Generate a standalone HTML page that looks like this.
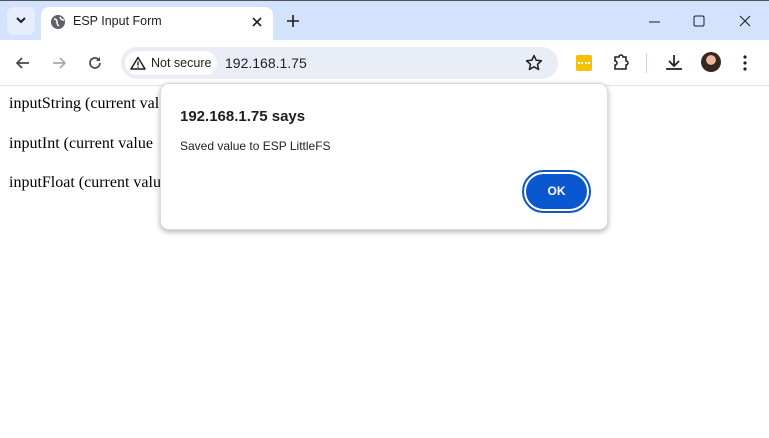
<!DOCTYPE html>
<html><head><meta charset="utf-8"><style>
*{margin:0;padding:0;box-sizing:border-box}
body{width:769px;height:438px;overflow:hidden;background:#fff;font-family:"Liberation Sans",sans-serif;position:relative}
.tabstrip{position:absolute;left:0;top:0;width:769px;height:40px;background:#d3e3fd;border-top:1px solid #555}
.tab{position:absolute;left:41px;top:6px;width:232px;height:34px;background:#fff;border-radius:8px 8px 0 0}
.toolbar{position:absolute;left:0;top:40px;width:769px;height:46px;background:#fff;border-bottom:1px solid #e3e3e3}
.omni{position:absolute;left:121px;top:7px;width:437px;height:32px;border-radius:16px;background:#e9eef6}
.chip{position:absolute;left:4px;top:4px;width:92px;height:24px;border-radius:12px;background:#fff;font-size:12.5px;color:#1f1f1f;line-height:24px;padding-left:26px}
.abs{position:absolute}
.content{position:absolute;left:9px;font-family:"Liberation Serif",serif;font-size:16px;color:#000}
.dlg{position:absolute;left:160px;top:83px;width:448px;height:147px;background:#fff;border-radius:9px;box-shadow:0 2px 6px rgba(0,0,0,.3);border:1px solid #ddd}
.ok{position:absolute;left:361px;top:86px;width:69px;height:43px;border-radius:22px;border:2px solid #0b57d0;padding:2px}
.ok div{width:100%;height:100%;border-radius:18px;background:#0b57d0;color:#fff;font-weight:bold;font-size:12px;text-align:center;line-height:35px}
</style></head><body>
<div class="tabstrip">
 <div class="abs" style="left:7px;top:6px;width:28px;height:28px;border-radius:7px;background:#e6eefc"></div>
 <svg class="abs" style="left:15px;top:14px" width="12" height="10"><path d="M2 3l4 4 4-4" stroke="#1f1f1f" stroke-width="2" fill="none"/></svg>
 <div class="tab">
  <svg class="abs" style="left:9px;top:7px" width="16" height="16"><circle cx="8" cy="8" r="7" fill="#5f6368"/><path d="M4 5q3 0 3 3t2 4M10 3q1 3 4 3" stroke="#fff" stroke-width="1.5" fill="none"/></svg>
  <span class="abs" style="left:32px;top:7px;font-size:12.5px;color:#1f1f1f">ESP Input Form</span>
  <svg class="abs" style="left:210px;top:9px" width="12" height="12"><path d="M2 2l8 8M10 2l-8 8" stroke="#1f1f1f" stroke-width="1.6"/></svg>
 </div>
 <svg class="abs" style="left:286px;top:13px" width="14" height="14"><path d="M7 1v12M1 7h12" stroke="#1f1f1f" stroke-width="1.6"/></svg>
 <svg class="abs" style="left:648px;top:14px" width="14" height="14"><path d="M1 7h11" stroke="#1f1f1f"/></svg>
 <svg class="abs" style="left:693px;top:14px" width="12" height="12"><rect x="1" y="1" width="10" height="10" rx="1.5" stroke="#1f1f1f" fill="none"/></svg>
 <svg class="abs" style="left:739px;top:14px" width="12" height="12"><path d="M1 1l10 10M11 1l-10 10" stroke="#1f1f1f" stroke-width="1.1"/></svg>
</div>
<div class="toolbar">
 <svg class="abs" style="left:15px;top:15px" width="16" height="16"><path d="M14 8H2M7 3L2 8l5 5" stroke="#474747" stroke-width="1.7" fill="none"/></svg>
 <svg class="abs" style="left:51px;top:15px" width="16" height="16"><path d="M2 8h12M9 3l5 5-5 5" stroke="#aaa" stroke-width="1.7" fill="none"/></svg>
 <svg class="abs" style="left:87px;top:15px" width="16" height="16"><path d="M13 8a5 5 0 1 1-1.5-3.6" stroke="#474747" stroke-width="1.7" fill="none"/><path d="M13 2v4h-4z" fill="#474747"/></svg>
 <div class="omni">
  <div class="chip">Not secure</div>
  <svg class="abs" style="left:9px;top:9px" width="16" height="14"><path d="M8 1.5L1 13h14z" stroke="#1f1f1f" stroke-width="1.5" fill="none" stroke-linejoin="round"/><path d="M8 5.5v4M8 10.5v1.3" stroke="#1f1f1f" stroke-width="1.4"/></svg>
  <span class="abs" style="left:104px;top:8px;font-size:14px;color:#1f1f1f">192.168.1.75</span>
  <svg class="abs" style="left:404px;top:7px" width="18" height="18"><path d="M9 1.5l2.2 4.8 5.2.5-3.9 3.5 1.1 5.2L9 12.8l-4.6 2.7 1.1-5.2L1.6 6.8l5.2-.5z" stroke="#1f1f1f" stroke-width="1.5" fill="none" stroke-linejoin="round"/></svg>
 </div>
 <div class="abs" style="left:576px;top:15px;width:16px;height:16px;background:#f2c200;border-radius:2px"></div>
 <div class="abs" style="left:578px;top:22px;width:12px;height:2px;border-top:2px dotted #fff"></div>
 <svg class="abs" style="left:612px;top:13px" width="18" height="18"><path d="M3 4h4a2 2 0 0 1 4 0h3v4a2 2 0 0 1 0 4v4H3v-4a2 2 0 0 0 0-4z" stroke="#1f1f1f" stroke-width="1.5" fill="none"/></svg>
 <div class="abs" style="left:646px;top:13px;width:1px;height:20px;background:#c4d7f5"></div>
 <svg class="abs" style="left:665px;top:13px" width="18" height="18"><path d="M9 2v10M4 8l5 5 5-5M2 15v1h14v-1" stroke="#1f1f1f" stroke-width="1.7" fill="none"/></svg>
 <div class="abs" style="left:701px;top:12px;width:20px;height:20px;border-radius:50%;background:radial-gradient(circle at 50% 40%,#e8b89a 0 30%,#3a2620 32%);"></div>
 <svg class="abs" style="left:742px;top:14px" width="6" height="18"><circle cx="3" cy="3" r="1.6" fill="#1f1f1f"/><circle cx="3" cy="9" r="1.6" fill="#1f1f1f"/><circle cx="3" cy="15" r="1.6" fill="#1f1f1f"/></svg>
</div>
<div class="content" style="top:95px">inputString (current val</div>
<div class="content" style="top:135px">inputInt (current value</div>
<div class="content" style="top:174px">inputFloat (current valu</div>
<div class="dlg">
 <div class="abs" style="left:19px;top:24px;font-size:15px;font-weight:bold;color:#1f1f1f">192.168.1.75 says</div>
 <div class="abs" style="left:19px;top:55px;font-size:12px;color:#1f1f1f">Saved value to ESP LittleFS</div>
 <div class="ok"><div>OK</div></div>
</div>
</body></html>
